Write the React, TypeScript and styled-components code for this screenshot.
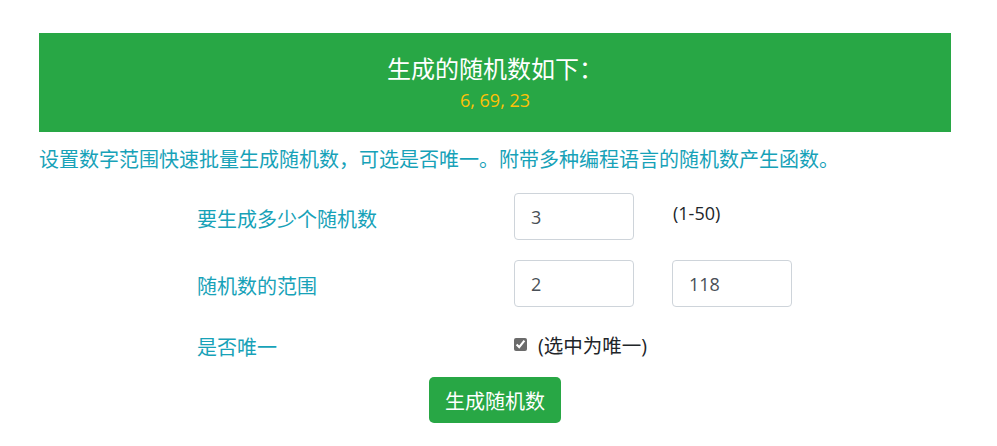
import React, { useState } from 'react'
import styled, { createGlobalStyle } from 'styled-components'

const GlobalStyle = createGlobalStyle`
  body {
    margin: 0;
    background: #fff;
    font-family: "Open Sans", "Noto Sans CJK SC", sans-serif;
  }
`

const Page = styled.div`
  padding: 33px 0 0 39px;
  width: 912px;
`

const Banner = styled.div`
  background: #28a745;
  height: 99px;
  box-sizing: border-box;
  padding-top: 20px;
  display: flex;
  flex-direction: column;
  align-items: center;
`

const BannerTitle = styled.div`
  color: #fff;
  font-size: 24px;
  line-height: 32px;
`

const Numbers = styled.div`
  color: #ffc107;
  font-size: 18px;
  line-height: 26px;
  margin-top: 2px;
`

const Intro = styled.p`
  margin: 13px 0 0;
  color: #17a2b8;
  font-size: 20px;
  line-height: 30px;
`

const Form = styled.div`
  margin-top: 18px;
  padding-left: 158px;
  display: grid;
  grid-template-columns: 317px 158px 1fr;
  row-gap: 20px;
`

const Label = styled.div`
  color: #17a2b8;
  font-size: 20px;
  display: flex;
  align-items: center;
  padding-top: 4px;
`

const Field = styled.div<{ $top?: boolean }>`
  display: flex;
  align-items: ${p => (p.$top ? 'flex-start' : 'center')};
  font-size: 18px;
  color: #212529;
`

const Input = styled.input`
  box-sizing: border-box;
  width: 120px;
  height: 47px;
  border: 1px solid #ced4da;
  border-radius: 4px;
  padding: 0 16px;
  font-family: "Open Sans", sans-serif;
  font-size: 18px;
  color: #495057;
  outline: none;
`

const Hint = styled.span`
  margin: 8px 0 0 1px;
  line-height: 24px;
`

const CheckRow = styled.label`
  display: flex;
  align-items: center;
  font-size: 19.5px;
  color: #212529;
  height: 34px;
`

const Check = styled.input`
  margin: 0 11px 0 0;
  width: 13px;
  height: 13px;
  accent-color: #6b6b6b;
`

const ButtonRow = styled.div`
  display: flex;
  justify-content: center;
  margin-top: 16px;
`

const Button = styled.button`
  background: #28a745;
  border: none;
  border-radius: 5px;
  color: #fff;
  font-family: "Open Sans", "Noto Sans CJK SC", sans-serif;
  font-size: 20px;
  width: 132px;
  height: 46px;
  padding: 0;
  cursor: pointer;
`

export default function App() {
  const [count, setCount] = useState('3')
  const [min, setMin] = useState('2')
  const [max, setMax] = useState('118')
  const [unique, setUnique] = useState(true)

  return (
    <Page>
      <GlobalStyle />
      <Banner>
        <BannerTitle>生成的随机数如下：</BannerTitle>
        <Numbers>6, 69, 23</Numbers>
      </Banner>
      <Intro>设置数字范围快速批量生成随机数，可选是否唯一。附带多种编程语言的随机数产生函数。</Intro>
      <Form>
        <Label>要生成多少个随机数</Label>
        <Field>
          <Input value={count} onChange={e => setCount(e.target.value)} />
        </Field>
        <Field $top>
          <Hint>(1-50)</Hint>
        </Field>

        <Label>随机数的范围</Label>
        <Field>
          <Input value={min} onChange={e => setMin(e.target.value)} />
        </Field>
        <Field>
          <Input value={max} onChange={e => setMax(e.target.value)} />
        </Field>

        <Label>是否唯一</Label>
        <Field>
          <CheckRow>
            <Check type="checkbox" checked={unique} onChange={e => setUnique(e.target.checked)} />
            (选中为唯一)
          </CheckRow>
        </Field>
        <div />
      </Form>
      <ButtonRow>
        <Button>生成随机数</Button>
      </ButtonRow>
    </Page>
  )
}
